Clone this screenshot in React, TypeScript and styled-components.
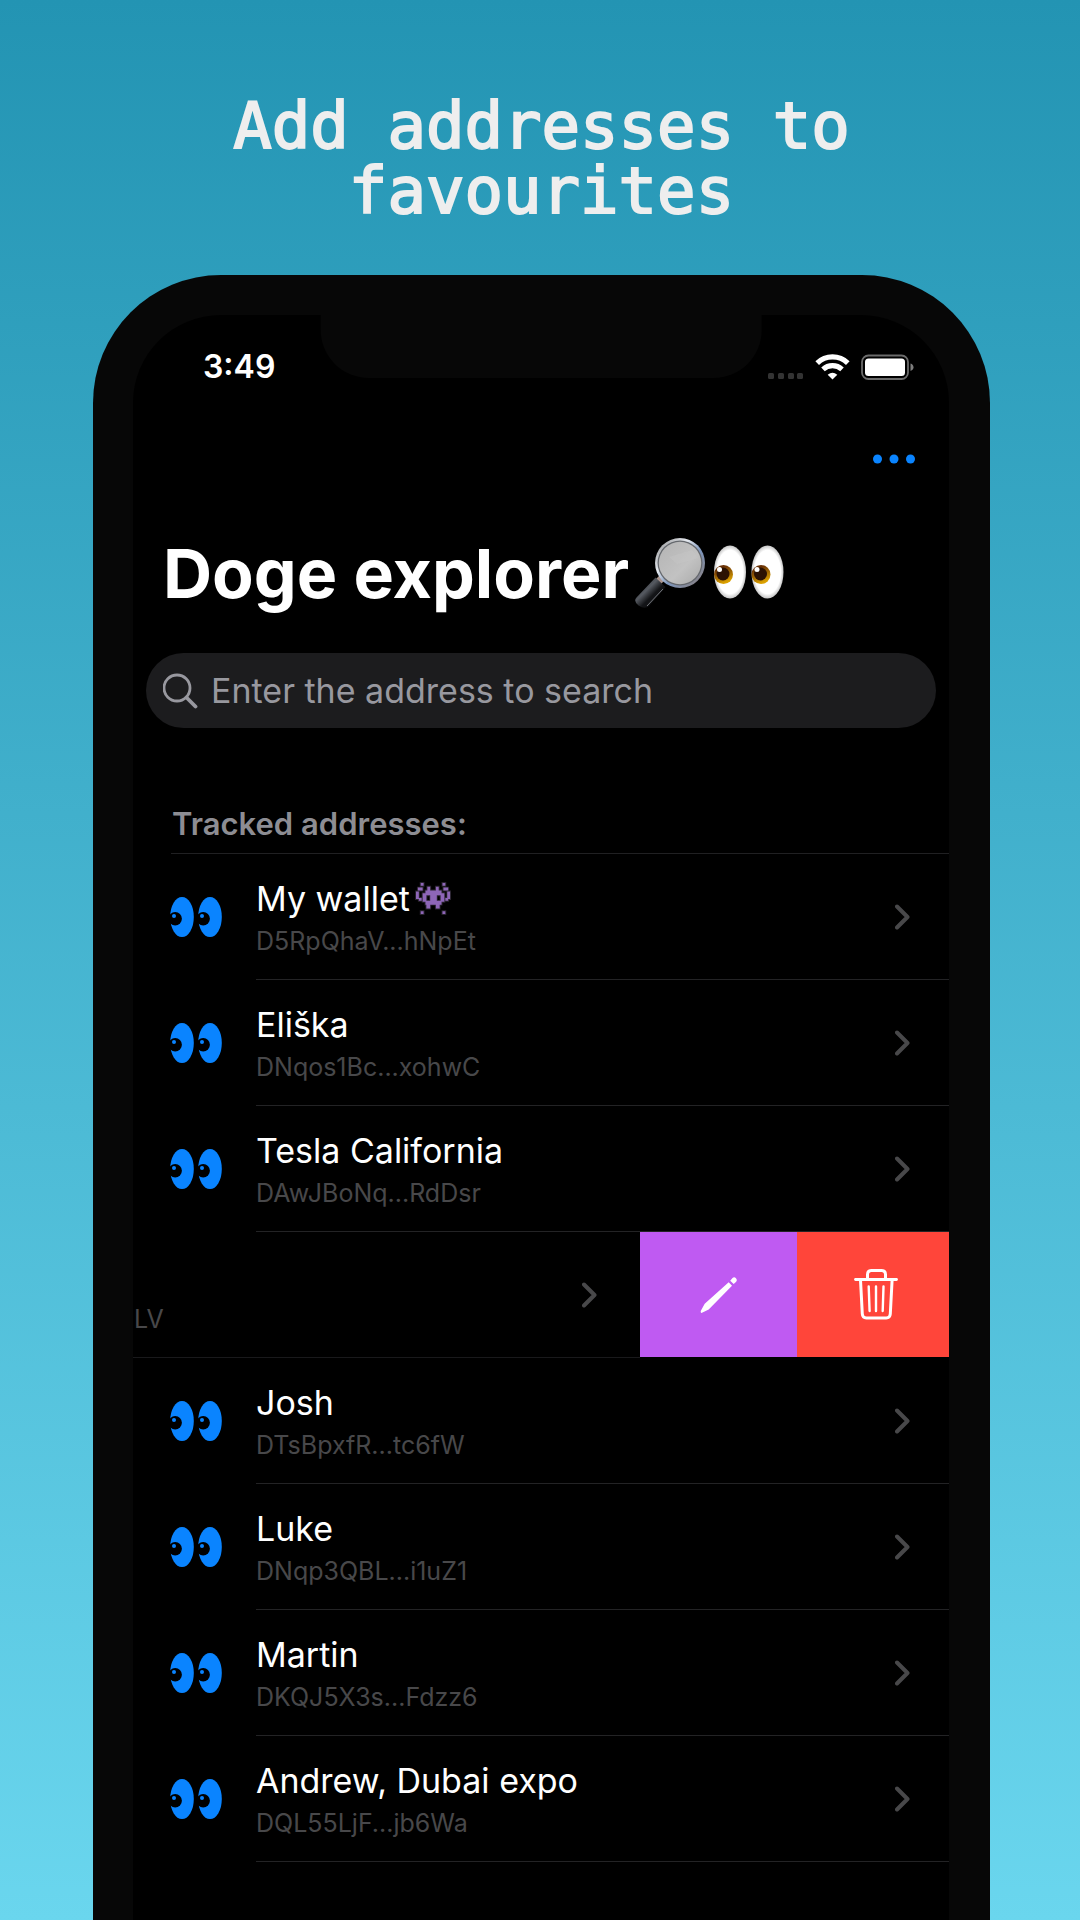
import React from "react";
import styled, { createGlobalStyle } from "styled-components";

const GlobalStyle = createGlobalStyle`
  *, *::before, *::after { box-sizing: border-box; }
  body {
    margin: 0;
    background: #6ad6ee;
    font-family: Inter, "Liberation Sans", sans-serif;
    color: #fff;
  }
  h1, h2, p, ul { margin: 0; padding: 0; }
  button { border: 0; padding: 0; background: none; cursor: pointer; font: inherit; color: inherit; }
  svg { display: block; flex: none; }
`;

const Page = styled.main`
  min-height: 100vh;
  display: flex;
  flex-direction: column;
  align-items: stretch;
  padding: 94px 90px 0 93px;
  background: linear-gradient(180deg, #2394b3 0%, #6ad6ee 100%);
`;

const Headline = styled.h1`
  max-width: 700px;
  margin: 0 auto 51px;
  text-align: center;
  font: 400 64px/65px "DejaVu Sans Mono", "Liberation Mono", monospace;
  -webkit-text-stroke: 2px #eee;
  color: #eee;
`;

const Phone = styled.div`
  flex: 1;
  display: flex;
  flex-direction: column;
  padding: 40px 41px 0 40px;
  border-radius: 128px 128px 0 0;
  background: #070707;
`;

const Screen = styled.div`
  flex: 1;
  position: relative;
  overflow: hidden;
  border-radius: 88px 88px 0 0;
  background: #000;
`;

const Notch = styled.div`
  position: absolute;
  top: 0;
  left: 50%;
  width: 54%;
  height: 63px;
  transform: translateX(-50%);
  border-radius: 0 0 48px 48px;
  background: #070707;
`;

const StatusBar = styled.header`
  display: flex;
  align-items: center;
  justify-content: space-between;
  height: 104px;
  padding: 0 35px 0 70px;
`;

const Time = styled.time`
  font-size: 32px;
  line-height: 40px;
  font-weight: 600;
`;

const StatusIcons = styled.div`
  display: flex;
  align-items: center;
  gap: 11px;
`;

const Toolbar = styled.div`
  display: flex;
  justify-content: flex-end;
  padding: 20px 34px 0;
`;

const MenuButton = styled.button`
  display: flex;
  align-items: center;
  height: 40px;
`;

const Title = styled.h2`
  display: flex;
  align-items: center;
  gap: 5px;
  margin-top: 46px;
  padding-left: 30px;
  font-size: 68px;
  line-height: 96px;
  font-weight: 700;
  white-space: nowrap;
`;

const Emojis = styled.span`
  display: flex;
  gap: 8px;
`;

const SearchBox = styled.label`
  display: flex;
  align-items: center;
  gap: 12px;
  height: 75px;
  margin: 32px 13px 0;
  padding: 0 17px;
  border-radius: 38px;
  background: #1c1c1e;
`;

const SearchInput = styled.input`
  flex: 1;
  min-width: 0;
  border: 0;
  outline: 0;
  padding: 0;
  background: none;
  color: #fff;
  font: 400 34px/44px Inter, "Liberation Sans", sans-serif;
  &::placeholder { color: #98989f; opacity: 1; }
`;

const SectionTitle = styled.h2`
  margin: 76px 0 0 38px;
  padding: 0 1px 9px;
  border-bottom: 1px solid #202022;
  color: #8d8d93;
  font-size: 31px;
  line-height: 40px;
  font-weight: 600;
`;

const List = styled.ul`
  list-style: none;
`;

const Row = styled.li`
  display: flex;
  height: 126px;
`;

const EyesSlot = styled.div`
  display: flex;
  align-items: center;
  width: 123px;
  padding-left: 37px;
`;

const RowBody = styled.div`
  flex: 1;
  display: flex;
  align-items: center;
  justify-content: space-between;
  padding-right: 39px;
  border-bottom: 1px solid #232325;
`;

const Labels = styled.div`
  padding-top: 4px;
`;

const Name = styled.p`
  display: flex;
  align-items: center;
  gap: 4px;
  height: 44px;
  font-size: 34px;
  line-height: 44px;
`;

const Address = styled.p`
  height: 40px;
  color: #48484a;
  font-size: 25px;
  line-height: 40px;
`;

const SwipedBody = styled(RowBody)`
  padding: 0 43px 0 1px;
  border-bottom-color: #19191b;
`;

const Actions = styled.div`
  display: flex;
  flex: none;
  margin-right: -5px;
`;

const Action = styled.button<{ $color: string }>`
  display: flex;
  align-items: center;
  justify-content: center;
  width: 157px;
  height: 125px;
  background: ${(p) => p.$color};
`;

const Chevron = () => (
  <svg width="15" height="26" viewBox="0 0 15 26" fill="none" stroke="#48484a" strokeWidth="4" strokeLinecap="round" strokeLinejoin="round">
    <path d="M2 2.5 12.5 13 2 23.5" />
  </svg>
);

const BlueEyes = () => (
  <svg width="52" height="40" viewBox="0 0 52 40" aria-hidden="true">
    {[0, 28].map((x) => (
      <g key={x} transform={`translate(${x} 0)`}>
        <ellipse cx="12" cy="20" rx="11.8" ry="20" fill="#0a84ff" />
        <circle cx="5.2" cy="21.7" r="6.7" fill="#000" />
        <path d="M.3 17.2V27H-1.5V17.2Z" fill="#000" />
        <circle cx="4" cy="19" r="2" fill="#0a84ff" />
      </g>
    ))}
  </svg>
);

const Invader = () => (
  <svg width="39" height="35" viewBox="-1 -1 41 37" fill="#8e66b8" stroke="#29232e" strokeWidth="2" paintOrder="stroke" aria-hidden="true">
    <path d="M6 1h3v3H6zM29 1h3v3h-3zM6 31h3v3H6zM29 31h3v3h-3z" />
    <path d="M1 10h3v8H1zM34 10h3v8h-3zM3 6h5v3H3zM30 6h5v3h-5zM4 17h5v3H4zM30 17h5v3h-5z" />
    <path fillRule="evenodd" d="M13 5h3v4h6V5h3v4h3v3h3v9h-3v3h-2v4h-4v-4h-6v4h-4v-4H11v-3H8v-9h3V9h2ZM12 14v6h4v-6ZM23 14v6h4v-6Z" />
  </svg>
);

const Magnifier = () => (
  <svg width="72" height="72" viewBox="0 0 72 72" aria-hidden="true">
    <defs>
      <linearGradient id="rim" x1="0" y1="0" x2="1" y2="1">
        <stop offset="0" stopColor="#858585" />
        <stop offset=".35" stopColor="#e5e9ef" />
        <stop offset=".58" stopColor="#7d96bd" />
        <stop offset="1" stopColor="#8b7b74" />
      </linearGradient>
      <linearGradient id="handle" x1="0" y1="0" x2="1" y2="1">
        <stop offset="0" stopColor="#191b1f" />
        <stop offset=".4" stopColor="#555960" />
        <stop offset=".58" stopColor="#141518" />
        <stop offset="1" stopColor="#090909" />
      </linearGradient>
      <linearGradient id="glass" x1="0" y1="0" x2="1" y2="1">
        <stop offset="0" stopColor="#b4b4b4" />
        <stop offset=".6" stopColor="#c2c2c2" />
        <stop offset="1" stopColor="#aaa" />
      </linearGradient>
    </defs>
    <path d="m23 46 5-5" stroke="#a9938c" strokeWidth="7" />
    <path d="M21.5 40.5 31.5 50 15.5 68.5Q11 73 4.500 68.500Q-1 64 2.500 60.500Z" fill="url(#handle)" />
    <path d="m13 69 16-17" stroke="#74777c" strokeWidth="1" />
    <circle cx="46" cy="26" r="25" fill="url(#rim)" />
    <circle cx="46" cy="26" r="22.500" fill="#65686d" />
    <circle cx="46" cy="26" r="21.200" fill="url(#glass)" />
    <path d="m35 20 23-7 6 8-21 6Z" fill="#c9c9c9" opacity=".35" />
  </svg>
);

const Eyes = () => (
  <svg width="70" height="72" viewBox="0 0 70 72" aria-hidden="true">
    <defs>
      <radialGradient id="white">
        <stop offset=".82" stopColor="#fff" />
        <stop offset="1" stopColor="#c5c5c5" />
      </radialGradient>
      <linearGradient id="iris" x1="0" y1="0" x2=".4" y2="1">
        <stop offset=".25" stopColor="#6a3206" />
        <stop offset="1" stopColor="#dba100" />
      </linearGradient>
    </defs>
    {[0, 37.5].map((x) => (
      <g key={x} transform={`translate(${x} 0)`}>
        <ellipse cx="16" cy="35" rx="16" ry="26.500" fill="url(#white)" />
        <circle cx="9.500" cy="37.500" r="9.500" fill="url(#iris)" />
        <circle cx="9" cy="37" r="6.500" fill="#2c1203" />
        <circle cx="5.500" cy="32.500" r="2.500" fill="#fff" />
      </g>
    ))}
  </svg>
);

const Signal = () => (
  <svg width="36" height="26" viewBox="0 0 36 26" fill="#333" aria-hidden="true">
    {[0, 10, 20, 29].map((x) => (
      <rect key={x} x={x} y="19" width="6" height="6" rx="1.500" />
    ))}
  </svg>
);

const Wifi = () => (
  <svg width="35" height="26" viewBox="0 0 35 26" aria-hidden="true">
    <g fill="none" stroke="#fff" strokeWidth="5.200">
      <path d="M2.200 9.100a22 22 0 0 1 30.600 0" />
      <path d="M8 15.300a14 14 0 0 1 19 0" />
    </g>
    <path d="M17.500 25.500 12.700 20.700q4.800-4 9.600 0Z" fill="#fff" />
  </svg>
);

const Battery = () => (
  <svg width="53" height="26" viewBox="0 0 53 26" aria-hidden="true">
    <rect x="1" y="1.500" width="46" height="23.500" rx="6.500" fill="none" stroke="#6b6b6b" strokeWidth="1.800" />
    <rect x="4" y="4.500" width="40" height="17.500" rx="3.500" fill="#fff" />
    <path d="M49.500 9.500q3 1 3 3.700t-3 3.700Z" fill="#7d7d7d" />
  </svg>
);

const Dots = () => (
  <svg width="42" height="10" viewBox="0 0 42 10" fill="#0a84ff" aria-hidden="true">
    <circle cx="4.500" cy="5" r="4.500" />
    <circle cx="21" cy="5" r="4.500" />
    <circle cx="37.500" cy="5" r="4.500" />
  </svg>
);

const SearchIcon = () => (
  <svg width="36" height="36" viewBox="0 0 36 36" fill="none" stroke="#98989f" strokeLinecap="round" aria-hidden="true">
    <circle cx="14" cy="15" r="13" strokeWidth="2.800" />
    <path d="m23.500 24.500 9 9" strokeWidth="3.800" />
  </svg>
);

const Pencil = () => (
  <svg width="38" height="38" viewBox="0 0 38 38" fill="#fff" aria-hidden="true">
    <path d="M1 36.800Q.3 36 1 34.600L4.700 27.800 28.700 6.200 32 9.700 8.700 33.500 2.500 36.600Q1.500 37.200 1 36.800Z" />
    <path d="M30.200 4.700 32.500 2Q34.300.6 36 2.300 37.700 4 36.200 5.800L33.700 8Z" />
  </svg>
);

const Trash = () => (
  <svg width="44" height="52" viewBox="0 1 44 52" fill="none" stroke="#fff" strokeLinecap="round" strokeLinejoin="round" aria-hidden="true">
    <path d="M1.500 11.500h41" strokeWidth="2.800" />
    <path d="M13.500 11V6.500q0-4 4-4h10q4 0 4 4V11M6.500 12l1.800 34q.3 4 4 4h20q3.700 0 4-4l1.800-34" strokeWidth="3" />
    <path d="m14.700 18.500.9 24.500M22 18.500V43M29.500 18.500 28.700 43" strokeWidth="2.400" />
  </svg>
);

type Entry = { name: string; address: string; invader?: boolean };

const before: Entry[] = [
  { name: "My wallet", address: "D5RpQhaV...hNpEt", invader: true },
  { name: "Eliška", address: "DNqos1Bc...xohwC" },
  { name: "Tesla California", address: "DAwJBoNq...RdDsr" },
];

const after: Entry[] = [
  { name: "Josh", address: "DTsBpxfR...tc6fW" },
  { name: "Luke", address: "DNqp3QBL...i1uZ1" },
  { name: "Martin", address: "DKQJ5X3s...Fdzz6" },
  { name: "Andrew, Dubai expo", address: "DQL55LjF...jb6Wa" },
];

const AddressRow = ({ name, address, invader }: Entry) => (
  <Row>
    <EyesSlot>
      <BlueEyes />
    </EyesSlot>
    <RowBody>
      <Labels>
        <Name>
          {name}
          {invader && <Invader />}
        </Name>
        <Address>{address}</Address>
      </Labels>
      <Chevron />
    </RowBody>
  </Row>
);

const SwipedRow = () => (
  <Row>
    <SwipedBody>
      <Labels>
        <Name />
        <Address>LV</Address>
      </Labels>
      <Chevron />
    </SwipedBody>
    <Actions>
      <Action $color="#bf5af2" aria-label="Edit">
        <Pencil />
      </Action>
      <Action $color="#ff453a" aria-label="Delete">
        <Trash />
      </Action>
    </Actions>
  </Row>
);

export default function App() {
  return (
    <>
      <GlobalStyle />
      <Page>
        <Headline>Add addresses to favourites</Headline>
        <Phone>
          <Screen>
            <Notch />
            <StatusBar>
              <Time>3:49</Time>
              <StatusIcons>
                <Signal />
                <Wifi />
                <Battery />
              </StatusIcons>
            </StatusBar>
            <Toolbar>
              <MenuButton aria-label="More">
                <Dots />
              </MenuButton>
            </Toolbar>
            <Title>
              Doge explorer
              <Emojis>
                <Magnifier />
                <Eyes />
              </Emojis>
            </Title>
            <SearchBox>
              <SearchIcon />
              <SearchInput type="search" aria-label="Search address" placeholder="Enter the address to search" />
            </SearchBox>
            <SectionTitle>Tracked addresses:</SectionTitle>
            <List>
              {before.map((e) => (
                <AddressRow key={e.name} {...e} />
              ))}
              <SwipedRow />
              {after.map((e) => (
                <AddressRow key={e.name} {...e} />
              ))}
            </List>
          </Screen>
        </Phone>
      </Page>
    </>
  );
}
